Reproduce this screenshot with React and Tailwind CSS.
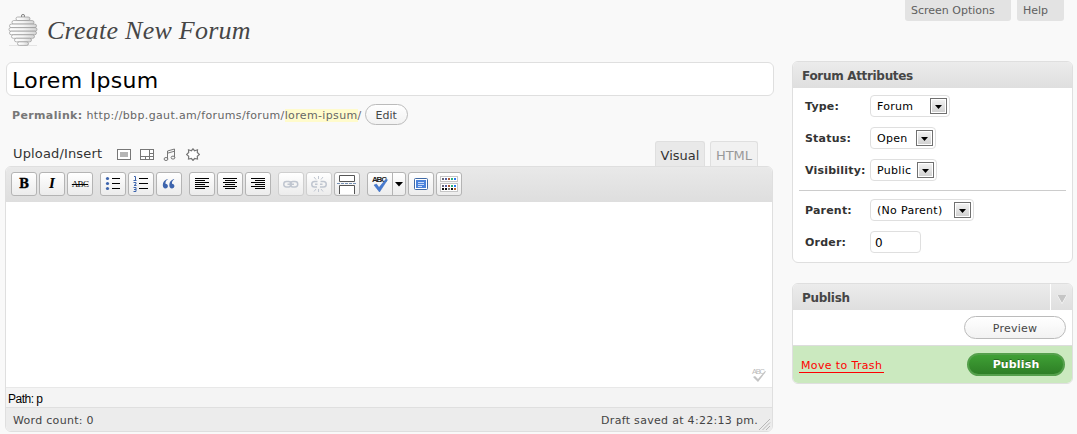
import React from "react";

function ToolButton({ children, faded, className = "" }) {
  return (
    <div
      className={`flex h-6 w-[26px] shrink-0 items-center justify-center rounded-[3px] border bg-linear-to-b from-white to-[#ececec] ${
        faded ? "border-[#cfcfcf]" : "border-[#b4b4b4]"
      } ${className}`}
    >
      {children}
    </div>
  );
}

function Icon({ w = 20, h = 20, children }) {
  return (
    <svg width={w} height={h} viewBox={`0 0 ${w} ${h}`} className="block shrink-0" fill="none">
      {children}
    </svg>
  );
}

function AlignIcon({ rows }) {
  return (
    <Icon>
      {rows.map(([x, w], i) => (
        <rect key={i} x={x} y={4 + i * 2} width={w} height="1" fill="#000" />
      ))}
    </Icon>
  );
}

function Swatches({ y, dark }) {
  const colors = dark
    ? ["#111", "#111", "#777", "#111", "#b0602d"]
    : ["#667", "#5560a0", "#a85a3c", "#2fae7c", "#2878f0"];
  return colors.map((c, i) => <rect key={i} x={3 + i * 3} y={y} width="2" height="2" fill={c} />);
}

function Toolbar() {
  return (
    <div className="flex h-[35px] shrink-0 gap-[7px] bg-linear-to-b from-[#e9e9e9] to-[#dedede] pt-[5px] pl-[5px]">
      <div className="flex gap-0.5">
        <ToolButton>
          <span className="font-['DejaVu_Serif',serif] text-[12px] leading-none font-bold text-black [-webkit-text-stroke:0.3px_#000]">B</span>
        </ToolButton>
        <ToolButton>
          <span className="font-['DejaVu_Serif',serif] text-[12px] leading-none font-bold text-black italic">I</span>
        </ToolButton>
        <ToolButton>
          <span className="font-['Liberation_Serif',serif] text-[9px] leading-none tracking-[-0.7px] text-black line-through">ABC</span>
        </ToolButton>
      </div>
      <div className="flex gap-0.5">
        <ToolButton>
          <Icon>
            {[3, 8, 13].map((y) => (
              <g key={y}>
                <circle cx="4.500" cy={y + 1.5} r="1.600" fill="#3d64ad" />
                <rect x="9" y={y + 1} width="8" height="1" fill="#000" />
              </g>
            ))}
          </Icon>
        </ToolButton>
        <ToolButton>
          <Icon>
            <path d="M3 2.500h1.500v4M2.500 6.500h3M2.500 8.500h2.500v1.500l-2 1.500h2.500M2.500 13.500h2.500v4h-2.500M3 15.500h2" stroke="#3d64ad" />
            {[4, 9, 14].map((y) => (
              <rect key={y} x="8" y={y} width="9" height="1" fill="#000" />
            ))}
          </Icon>
        </ToolButton>
        <ToolButton>
          <Icon>
            <path
              d="M8.500 5C5.500 6 3.800 8 3.800 11c0 2 1 3.500 2.600 3.500 1.500 0 2.500-1 2.500-2.400S8 9.800 6.500 9.700C6.300 8 7 6.500 8.700 5.500zM15 5c-3 1-4.700 3-4.700 6 0 2 1 3.500 2.600 3.500 1.500 0 2.500-1 2.500-2.400s-.9-2.300-2.400-2.400c-.2-1.700.5-3.200 2.200-4.200z"
              fill="#3d64ad"
            />
          </Icon>
        </ToolButton>
      </div>
      <div className="flex gap-0.5">
        <ToolButton>
          <AlignIcon rows={[[3, 14], [3, 10], [3, 14], [3, 10], [3, 14], [3, 10]]} />
        </ToolButton>
        <ToolButton>
          <AlignIcon rows={[[3, 14], [5, 10], [3, 14], [5, 10], [3, 14], [5, 10]]} />
        </ToolButton>
        <ToolButton>
          <AlignIcon rows={[[3, 14], [7, 10], [3, 14], [7, 10], [3, 14], [7, 10]]} />
        </ToolButton>
      </div>
      <div className="flex gap-0.5">
        <ToolButton faded>
          <Icon>
            <g stroke="#c0c6d0" strokeWidth="1.500">
              <rect x="2.750" y="7.500" width="7.500" height="5.500" rx="2.700" />
              <rect x="9.250" y="7.500" width="7.500" height="5.500" rx="2.700" />
              <path d="M6.500 10.300h6.500" />
            </g>
          </Icon>
        </ToolButton>
        <ToolButton faded>
          <Icon>
            <g stroke="#c0c6d0" strokeWidth="1.500">
              <path d="M8.500 7.500H5.500a2.700 2.700 0 0 0 0 5.500H8M6 10.300h2.500M11.500 7.500h3a2.700 2.700 0 0 1 0 5.500H11M11 10.300h2.500" />
              <path d="M9.500 2v3M5 3l2 2.500M14 3l-2 2.500M9.500 15v3M5 17.500l2-2.500M14 17.500l-2-2.500" strokeWidth="1" />
            </g>
          </Icon>
        </ToolButton>
        <ToolButton>
          <Icon w={22} h={20}>
            <path d="M3.500 7.500v-6h15v6zM3.500 20v-8.500h15V20" fill="#fff" stroke="#555" />
            <path d="M1 9.500h20" stroke="#7792b5" strokeDasharray="3 1" />
          </Icon>
        </ToolButton>
      </div>
      <div className="flex gap-0.5">
        <div className="flex h-6 w-[39px] rounded-[3px] border border-[#b4b4b4] bg-linear-to-b from-white to-[#ececec]">
          <div className="flex w-[25px] items-center justify-center border-r border-[#b4b4b4]">
            <Icon w={20} h={22}>
              <text x="2" y="9" fontFamily="Liberation Sans, sans-serif" fontSize="8" fontWeight="bold" textLength="15" fill="#222">ABC</text>
              <path d="M4 12l2.500-1 2.500 3.500L16 6l1.500.8L9.500 19z" fill="#477bd0" stroke="#3767b8" strokeWidth=".5" />
            </Icon>
          </div>
          <div className="flex flex-1 items-center justify-center">
            <Icon w={8} h={5}>
              <path d="M0 0h8L4 4.500z" fill="#000" />
            </Icon>
          </div>
        </div>
        <ToolButton>
          <Icon>
            <rect x="3.500" y="4.500" width="13" height="11" rx="1" fill="#fff" stroke="#3e69a6" />
            <rect x="5" y="6" width="10" height="8" fill="#4a82da" />
            <path d="M7 8.500h6M7 10.500h6M7 12.500h4" stroke="#c7dafa" />
          </Icon>
        </ToolButton>
        <ToolButton>
          <Icon>
            <rect x="1.500" y="2.500" width="17" height="5" fill="#fff" stroke="#c5c5c5" />
            <rect x="1.500" y="9.500" width="17" height="8" fill="#fff" stroke="#c5c5c5" />
            <Swatches y={4} />
            <Swatches y={11} />
            <Swatches y={14} dark />
          </Icon>
        </ToolButton>
      </div>
    </div>
  );
}

function Select({ children, className }) {
  return (
    <div className={`flex h-[22px] items-center justify-between rounded-[4px] border border-[#dfdfdf] bg-white pr-0.5 pl-1.5 text-black ${className}`}>
      <span className="pt-px tracking-[0.3px] whitespace-nowrap">{children}</span>
      <span className="flex h-4 w-[17px] shrink-0 items-center justify-center border border-[#707070] bg-linear-to-b from-[#f4f4f4] to-[#cfcfcf] pt-0.5 shadow-[inset_0_0_0_1px_#fff]">
        <Icon w={7} h={4}>
          <path d="M0 0h7L3.500 4z" fill="#000" />
        </Icon>
      </span>
    </div>
  );
}

function Field({ label, children }) {
  return (
    <div className="flex h-[22px] items-center">
      <span className="w-[65px] shrink-0 pt-0.5 font-bold tracking-[0.2px] whitespace-nowrap text-[#333]">{label}</span>
      {children}
    </div>
  );
}

function Hive() {
  const bars = [
    [8, 14], [4, 22], [1.5, 27], [1, 28], [1.5, 27], [3.5, 23], [6.5, 17], [9.5, 11],
  ];
  return (
    <svg width="30" height="34" viewBox="0 0 30 34" className="block shrink-0">
      <defs>
        <linearGradient id="hive" x1="0" x2="1" y1="0" y2="0">
          <stop offset="0" stopColor="#fff" />
          <stop offset="0.5" stopColor="#f4f4f4" />
          <stop offset="1" stopColor="#d4d4d4" />
        </linearGradient>
      </defs>
      <path d="M1 32.500h28" stroke="#e4e4e4" />
      <circle cx="15" cy="3" r="1.600" fill="#eee" stroke="#888" />
      {bars.map(([x, w], i) => (
        <rect key={i} x={x} y={4 + i * 3.55} width={w} height="3.550" rx="1.770" fill="url(#hive)" stroke="#8f8f8f" strokeWidth=".65" />
      ))}
    </svg>
  );
}

function MediaIcons() {
  return (
    <div className="flex items-center gap-[9px]">
      <Icon w={14} h={13}>
        <rect x=".5" y="1.500" width="13" height="10" fill="#fff" stroke="#777" />
        <rect x="3" y="4" width="8" height="5" fill="#b5b5b5" />
      </Icon>
      <Icon w={14} h={13}>
        <rect x=".5" y="1.500" width="13" height="10" fill="#fff" stroke="#777" />
        <path d="M.5 8.500h13M9.500 1.500v10M5.500 8.500v3M9.500 5.500h4" stroke="#777" />
      </Icon>
      <Icon w={14} h={13}>
        <path d="M4.500 11V3l7-2v8.500M4.500 5.200l7-2" stroke="#777" />
        <ellipse cx="3" cy="11" rx="1.900" ry="1.500" stroke="#777" />
        <ellipse cx="10" cy="9.600" rx="1.900" ry="1.500" stroke="#777" />
      </Icon>
      <Icon w={14} h={13}>
        <path
          d="M7 .8l1.600 1.900 2.900-.9-.2 2.700 2.200 2-2.200 1.800.2 2.700-2.900-.5L7 12.400l-1.600-1.900-2.900.5.200-2.700-2.200-1.800 2.200-2-.2-2.700 2.900.9z"
          fill="#fff"
          stroke="#777"
          strokeWidth="1.200"
        />
      </Icon>
    </div>
  );
}

function Editor() {
  return (
    <div className="-ml-px flex h-[266px] w-[768px] shrink-0 flex-col overflow-hidden rounded-[6px] border border-[#dfdfdf] bg-white">
      <Toolbar />
      <div className="flex flex-1 items-end justify-end pr-[3px] pb-[3px]">
        <Icon w={18} h={18}>
          <text x="1" y="8" fontFamily="Liberation Sans, sans-serif" fontSize="7.500" textLength="13" fill="#bbb">ABC</text>
          <path d="M2 11l2-1 3 3 7-8 1 .5L7 16z" fill="#c4c4c4" />
        </Icon>
      </div>
      <div className="flex h-[20px] shrink-0 items-center border-t border-[#e8e8e8] bg-[#f4f4f4] pt-[3px] pl-0.5 font-['Liberation_Sans',sans-serif] text-[12px] leading-none tracking-[-0.5px] text-black">
        Path: p
      </div>
      <div className="flex h-[24px] shrink-0 items-center justify-between border-t border-[#dfdfdf] bg-[#ececec] pl-[7px] text-[11px] text-[#444]">
        <span className="pt-0.5 tracking-[0.3px]">Word count: 0</span>
        <div className="flex items-center">
          <span className="pt-0.5 tracking-[0.3px]">Draft saved at 4:22:13 pm.</span>
          <div className="flex h-[22px] items-end">
            <Icon w={14} h={14}>
              <path d="M1 13L12 2M4.500 13L12 5.500M8 13l4-4" stroke="#aaa" strokeWidth=".8" />
            </Icon>
          </div>
        </div>
      </div>
    </div>
  );
}

export default function App() {
  return (
    <div className="flex h-[434px] w-[1077px] overflow-hidden bg-[#f9f9f9] font-['DejaVu_Sans',sans-serif] text-[11px] leading-[14px]">
      <main className="flex w-[774px] shrink-0 flex-col pl-1.5">
        <header className="flex h-[62px] shrink-0 items-start pt-[13px] pl-0.5">
          <Hive />
          <h1 className="mt-0.5 ml-[9px] font-['Liberation_Serif',serif] text-[26px] leading-8 tracking-[0.25px] whitespace-nowrap text-[#464646] italic">
            Create New Forum
          </h1>
        </header>
        <div className="flex h-[34px] w-[768px] shrink-0 items-center rounded-[6px] border border-[#dfdfdf] bg-white pt-[3px] pl-[5px] text-[22px] leading-7 tracking-[0.3px] text-black">
          Lorem Ipsum
        </div>
        <div className="mt-2 flex h-[21px] shrink-0 items-center pl-1.5 tracking-[0.36px] whitespace-nowrap text-[#666]">
          <strong className="mr-1 pt-0.5 text-[#777]">Permalink:</strong>
          <span className="pt-0.5">http://bbp.gaut.am/forums/forum/</span>
          <span className="mt-0.5 bg-[#fffbcc] leading-[13px]">lorem-ipsum</span>
          <span className="pt-0.5">/</span>
          <span className="ml-[3px] flex h-[21px] w-[43px] items-center justify-center rounded-full border border-[#bbb] bg-linear-to-b from-white to-[#f2f2f2] pt-0.5 tracking-normal text-[#464646]">
            Edit
          </span>
        </div>
        <div className="mt-4 flex h-[25px] shrink-0 items-stretch pl-[7px] text-[13px]">
          <div className="flex w-[642px] items-center gap-[15px] text-[#333]">
            <span className="tracking-[0.15px]">Upload/Insert</span>
            <div className="pt-0.5">
              <MediaIcons />
            </div>
          </div>
          <div className="flex gap-[5px]">
            <div className="flex w-[50px] items-center justify-center rounded-t-[3px] border border-b-0 border-[#dfdfdf] bg-[#e9e9e9] pt-1 text-[#333]">Visual</div>
            <div className="flex w-[48px] items-center justify-center rounded-t-[3px] border border-b-0 border-[#dfdfdf] bg-[#f1f1f1] pt-1 text-[#999]">HTML</div>
          </div>
        </div>
        <Editor />
      </main>
      <aside className="ml-[18px] flex w-[281px] shrink-0 flex-col">
        <div className="-mr-1 flex h-[61px] shrink-0 items-start gap-1.5 pl-[113px] text-[#606060]">
          <div className="flex h-[21px] w-[106px] items-center rounded-b-[3px] bg-[#e3e3e3] pl-1.5 whitespace-nowrap">Screen Options</div>
          <div className="flex h-[21px] w-[47px] items-center rounded-b-[3px] bg-[#e3e3e3] pl-1.5">Help</div>
        </div>
        <section className="flex h-[202px] shrink-0 flex-col overflow-hidden rounded-[6px] border border-[#dfdfdf] bg-white">
          <h2 className="flex h-[26px] shrink-0 items-center bg-linear-to-b from-[#ececec] to-[#dfdfdf] pt-0.5 pl-[9px] text-[12px] font-bold tracking-[-0.32px] text-[#464646]">
            Forum Attributes
          </h2>
          <div className="flex flex-col gap-2.5 px-3 pt-[7px]">
            <Field label="Type:"><Select className="w-[80px]">Forum</Select></Field>
            <Field label="Status:"><Select className="w-[66px]">Open</Select></Field>
            <Field label="Visibility:"><Select className="w-[67px]">Public</Select></Field>
          </div>
          <hr className="mx-1.5 mt-[9px] border-0 border-t border-[#ccc]" />
          <div className="flex flex-col gap-2.5 px-3 pt-2">
            <Field label="Parent:"><Select className="w-[104px]">(No Parent)</Select></Field>
            <Field label="Order:">
              <div className="flex h-[22px] w-[51px] items-center rounded-[4px] border border-[#dfdfdf] bg-white pt-0.5 pl-1 text-[12px] text-black">0</div>
            </Field>
          </div>
        </section>
        <section className="mt-5 flex h-[101px] shrink-0 flex-col overflow-hidden rounded-[6px] border border-[#dfdfdf] bg-white">
          <div className="flex h-[26px] shrink-0 bg-linear-to-b from-[#ececec] to-[#dfdfdf] text-[#464646]">
            <h2 className="flex flex-1 items-center pt-0.5 pl-[9px] text-[12px] font-bold tracking-[-0.3px]">Publish</h2>
            <div className="flex w-[22px] items-center justify-center border-l border-white pt-1">
              <Icon w={10} h={9}>
                <path d="M0 0h10L5 9z" fill="#fff" />
                <path d="M.5 0h9L5 8z" fill="#c5c5c5" />
              </Icon>
            </div>
          </div>
          <div className="flex h-[35px] shrink-0 items-center justify-end pr-1.5">
            <div className="flex h-[23px] w-[102px] items-center justify-center rounded-full border border-[#bbb] bg-linear-to-b from-white to-[#f2f2f2] pt-0.5 tracking-[0.25px] text-[#464646]">Preview</div>
          </div>
          <div className="flex flex-1 items-center justify-between border-t border-[#ddd] bg-[#cbe9bf] pr-[7px] pl-1.5">
            <span className="mt-0.5 border-b border-[#f00] px-0.5 pt-px leading-[13px] tracking-[0.36px] whitespace-nowrap text-[#f00]">Move to Trash</span>
            <div className="flex h-[23px] w-[98px] items-center justify-center rounded-full border-2 border-[#55a04c] bg-linear-to-b from-[#3fa035] to-[#2e7f26] pt-px font-bold tracking-[0.15px] text-white [text-shadow:0_-1px_0_rgba(0,0,0,0.3)]">
              Publish
            </div>
          </div>
        </section>
      </aside>
    </div>
  );
}
